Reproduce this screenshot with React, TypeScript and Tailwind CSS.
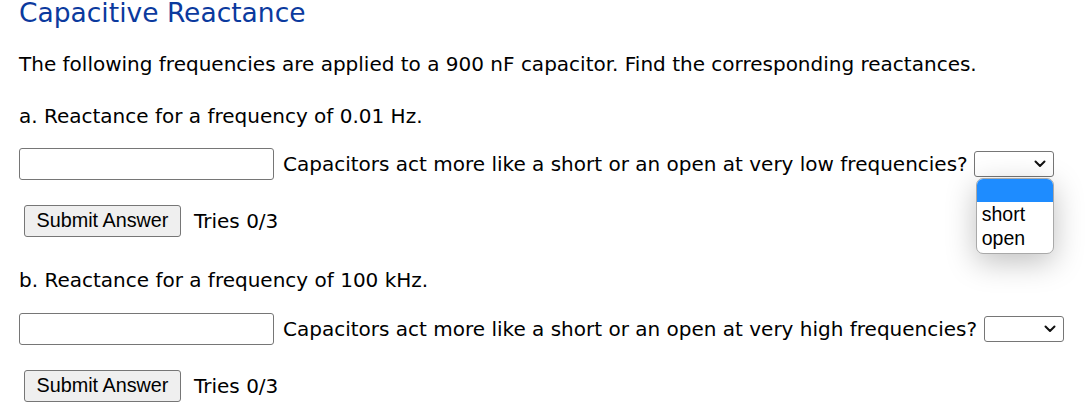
import { FC, ReactNode } from 'react'

const Chevron: FC = () => (
  <svg width="12" height="8" viewBox="0 0 12 8" className="block">
    <path d="M1.5 1.5 L6 6 L10.5 1.5" fill="none" stroke="#111" strokeWidth="2" strokeLinecap="round" strokeLinejoin="round" />
  </svg>
)

const FakeSelect: FC<{ open?: boolean; className?: string }> = ({ open, className }) => (
  <div className={`relative ${className ?? ''}`}>
    <div className="flex h-[26px] w-[80px] items-center justify-end rounded-[3px] border border-[#767676] bg-white pr-[7px]">
      <Chevron />
    </div>
    {open && (
      <div className="absolute left-[2px] top-[27px] z-10 w-[78px] overflow-hidden rounded-[7px] border border-[#a9a9a9] bg-white pb-[3px] font-['Liberation_Sans',Arial,sans-serif] text-[19.5px] leading-[24px] shadow-[0_8px_30px_rgba(0,0,0,0.25)]">
        <div className="h-[23px] bg-[#1e8cff]" />
        <div className="pl-[5px]">short</div>
        <div className="pl-[5px]">open</div>
      </div>
    )}
  </div>
)

const AnswerRow: FC<{ label: ReactNode; selectOpen?: boolean; selectGap: string }> = ({ label, selectOpen, selectGap }) => (
  <div className="flex h-[32px] items-center">
    <div className="h-[32px] w-[255px] rounded-[3px] border border-[#767676] bg-white" />
    <span className="ml-[9px] whitespace-nowrap leading-[24px]">{label}</span>
    <FakeSelect open={selectOpen} className={selectGap} />
  </div>
)

const SubmitRow: FC = () => (
  <div className="flex items-center">
    <button className="ml-[5px] h-[32px] w-[157px] rounded-[3px] border border-[#767676] bg-[#efefef] font-['Liberation_Sans',Arial,sans-serif] text-[19.8px] leading-none text-black">
      Submit Answer
    </button>
    <span className="ml-[13px] leading-[24px]">Tries 0/3</span>
  </div>
)

export default function App() {
  return (
    <div className="h-[413px] w-[1092px] overflow-hidden bg-white pl-[19px] font-['DejaVu_Sans',Verdana,sans-serif] text-[20px] text-black">
      <h2 className="h-[26px] text-[26.5px] leading-[26px] text-[#0b3a9e]">Capacitive Reactance</h2>
      <p className="mt-[26px] leading-[24px]">
        The following frequencies are applied to a 900 nF capacitor. Find the corresponding reactances.
      </p>

      <p className="mt-[28px] leading-[24px]">a. Reactance for a frequency of 0.01 Hz.</p>
      <div className="mt-[20px]">
        <AnswerRow
          label="Capacitors act more like a short or an open at very low frequencies?"
          selectOpen
          selectGap="ml-[6px]"
        />
      </div>
      <div className="mt-[25px]">
        <SubmitRow />
      </div>

      <p className="mt-[31px] leading-[24px]">b. Reactance for a frequency of 100 kHz.</p>
      <div className="mt-[21px]">
        <AnswerRow
          label="Capacitors act more like a short or an open at very high frequencies?"
          selectGap="ml-[7px]"
        />
      </div>
      <div className="mt-[25px]">
        <SubmitRow />
      </div>
    </div>
  )
}
